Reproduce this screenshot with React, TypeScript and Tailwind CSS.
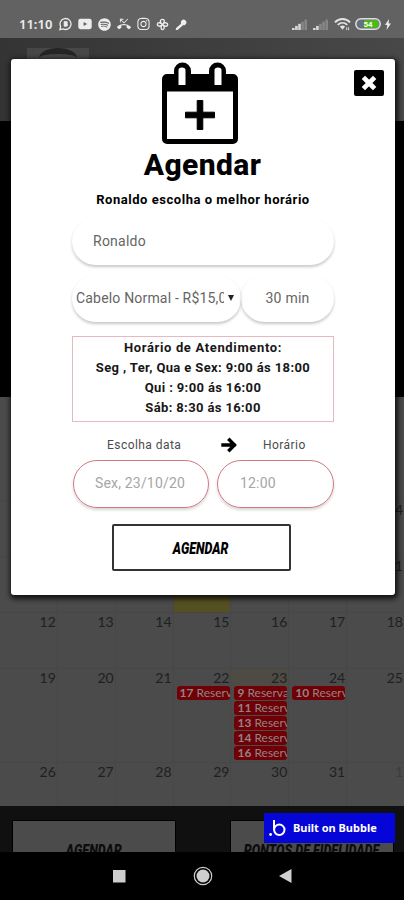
import { FaSpotify, FaInstagram } from "react-icons/fa";
import { MdPhoneMissed } from "react-icons/md";
import clsx from "clsx";

type Day = { day: string; events?: string[]; marked?: boolean; today?: boolean };

const weeks: { height: string; days: Day[] }[] = [
  {
    height: "h-14",
    days: [{ day: "" }, { day: "" }, { day: "" }, { day: "1" }, { day: "2" }, { day: "3" }, { day: "4" }],
  },
  {
    height: "h-14",
    days: [
      { day: "5" },
      { day: "6" },
      { day: "7" },
      { day: "8", marked: true },
      { day: "9" },
      { day: "10" },
      { day: "11" },
    ],
  },
  {
    height: "h-14",
    days: [{ day: "12" }, { day: "13" }, { day: "14" }, { day: "15" }, { day: "16" }, { day: "17" }, { day: "18" }],
  },
  {
    height: "h-[94px]",
    days: [
      { day: "19" },
      { day: "20" },
      { day: "21" },
      { day: "22", events: ["17"] },
      { day: "23", events: ["9", "11", "13", "14", "16"], today: true },
      { day: "24", events: ["10"] },
      { day: "25" },
    ],
  },
  {
    height: "h-11",
    days: [{ day: "26" }, { day: "27" }, { day: "28" }, { day: "29" }, { day: "30" }, { day: "31" }, { day: "1" }],
  },
];

function Signal({ level }: { level: number }) {
  return (
    <svg viewBox="0 0 16 12" className="h-3 w-4">
      {[0, 1, 2, 3, 4].map((i) => (
        <rect key={i} x={i * 3.1} y={10 - i * 2.1} width="2.6" height={2 + i * 2.1} fill={i < level ? "#d6d6d6" : "#858585"} />
      ))}
    </svg>
  );
}

function StatusBar() {
  return (
    <div className="flex h-[38px] items-center justify-between bg-[#626262] pt-[10px] pr-[13px] pl-[19px] text-[#ededed]">
      <div className="flex items-center gap-[6px]">
        <span className="w-[34px] font-['Noto_Sans'] text-[13px] leading-none font-semibold whitespace-nowrap">11:10</span>
        <svg viewBox="0 0 14 14" className="h-[14px] w-[13px]" fill="none" stroke="currentColor" strokeWidth="1.4">
          <path d="M1 13l.8-3.300a5.900 5.900 0 1 1 2.500 2.500Z" />
          <path d="M5.500 4.300h2.300a1.300 1.300 0 0 1 .6 2.500 1.400 1.400 0 0 1-.4 2.700H5.500Z" fill="currentColor" strokeWidth="0.800" />
        </svg>
        <svg viewBox="0 0 15 12" className="h-3 w-[14px]" fill="currentColor">
          <path fillRule="evenodd" d="M2.500.5h10a2.200 2.200 0 0 1 2.200 2.200v6.600a2.200 2.200 0 0 1-2.200 2.200h-10A2.200 2.200 0 0 1 .3 9.300V2.700A2.200 2.200 0 0 1 2.500.5ZM6 3.800v4.400L9.800 6Z" />
        </svg>
        <FaSpotify className="h-[13px] w-[13px]" />
        <MdPhoneMissed className="h-[14px] w-[14px]" />
        <FaInstagram className="h-[14px] w-[13px]" />
        <svg viewBox="0 0 14 14" className="h-[13px] w-[13px]" fill="none" stroke="currentColor" strokeWidth="1.5">
          <path d="M7 7C4 5 4 1.500 7 1.500S9 5 7 7c2-3 6-2 5.500.5S9 9 7 7c3 2 2 5.500 0 5.500S5 9 7 7c-2 3-6 2-5.500-.5S5 5 7 7Z" />
        </svg>
        <svg viewBox="0 0 14 14" className="h-[13px] w-3" fill="currentColor">
          <path d="M8 2a3.300 3.300 0 0 1 5 4c-.6 1.200-2 2-3.300 1.700L3 13.500H.8L1.300 11 7 6C6.500 4.500 7 3 8 2Z" />
        </svg>
      </div>
      <div className="flex items-center gap-1">
        <Signal level={3} />
        <div className="ml-[1px]">
          <Signal level={2} />
        </div>
        <svg viewBox="0 0 18 14" className="ml-[1px] h-[14px] w-[17px]" fill="none" stroke="#e4e4e4" strokeWidth="2">
          <path d="M1 5.200C5.500.6 12.500.6 17 5.200M4 8c3-3 7-3 10 0" />
          <path d="m6.200 9.600 2.800 3.400 2.800-3.400c-1.700-1.500-3.900-1.500-5.600 0Z" fill="#e4e4e4" stroke="none" />
          <path d="M13.500 10.500v3M15.500 10.500v3" strokeWidth="1" />
        </svg>
        <svg viewBox="0 0 26 12" className="h-3 w-[26px]">
          <rect x="0.800" y="0.800" width="24.400" height="10.400" rx="5.200" fill="#66707c" stroke="#dedede" strokeWidth="1.500" />
          <path d="M9 2.200h11a3.800 3.800 0 0 1 0 7.600H9Z" fill="#49bd10" />
          <text x="13" y="9" textAnchor="middle" fill="#fff" className="font-['Roboto'] text-[8px] font-bold">
            54
          </text>
        </svg>
        <svg viewBox="0 0 6 11" className="h-[11px] w-[6px]" fill="currentColor">
          <path d="M4 0 0 6h2.300L1.500 11 6 4.500H3.600Z" />
        </svg>
      </div>
    </div>
  );
}

function Calendar() {
  return (
    <div className="h-[409px] w-[405px] overflow-hidden bg-[#4b4b4b] pt-[103px]">
      {weeks.map((week, w) => (
        <div key={w} className={clsx("grid grid-cols-7 border-t border-[#474747]", week.height)}>
          {week.days.map((d, i) => (
            <div key={i} className={clsx("min-w-0 border-r border-[#474747]", d.marked && "bg-[#555022]")}>
              <div
                className={clsx(
                  "h-[17px] pr-[1px] text-right font-['Lato'] text-[14px] leading-[17px]",
                  d.today && "bg-[#4d4b43]",
                  w === 4 && i === 6 ? "text-[#3d3d3d]" : "text-[#202020]"
                )}
              >
                {d.day}
              </div>
              {d.events?.map((hour) => (
                <div
                  key={hour}
                  className="mb-[1px] ml-[3px] h-[14px] w-[53px] overflow-hidden rounded-[3px] bg-[#700006] pl-[3px] font-['Lato'] text-[12px] leading-[14px] whitespace-nowrap text-[#8f8585]"
                >
                  <b>{hour}</b> Reserva
                </div>
              ))}
            </div>
          ))}
        </div>
      ))}
    </div>
  );
}

function CalendarPlus() {
  return (
    <svg viewBox="0 0 76 84" className="h-[84px] w-[76px]">
      <path
        fillRule="evenodd"
        d="M5 12h7V9a8.500 8.500 0 0 1 17 0v3h18V9a8.500 8.500 0 0 1 17 0v3h7a5 5 0 0 1 5 5v60a5 5 0 0 1-5 5H5a5 5 0 0 1-5-5V17a5 5 0 0 1 5-5ZM5 29.500v47.500h66V29.500Z"
      />
      <path d="M16.500 8a3.500 2.500 0 0 1 7 0v15h-7ZM52.500 8a3.500 2.500 0 0 1 7 0v15h-7Z" fill="#fff" />
      <path d="M35.200 38.500h5.600v11.700h11.700v5.600H40.800v11.700h-5.600V55.800H23.500v-5.600h11.700Z" stroke="#000" strokeWidth="1" strokeLinejoin="round" />
    </svg>
  );
}

function BookingModal() {
  return (
    <div className="absolute top-[59px] left-[11px] flex h-[536px] w-[384px] flex-col items-center rounded-[3px] bg-white pt-[3px] shadow-[1px_2px_5px_2px_rgba(0,0,0,0.75)]">
      <button className="absolute top-[11px] right-[11px] flex h-[26px] w-[30px] items-center justify-center rounded-[2px] bg-black">
        <svg viewBox="0 0 16 16" className="h-4 w-4" stroke="#fff" strokeWidth="4.700" strokeLinecap="square">
          <path d="m4 4 8 8M12 4l-8 8" />
        </svg>
      </button>
      <div className="mr-[6px]">
        <CalendarPlus />
      </div>
      <h1 className="mt-[1px] mr-px h-9 font-['Roboto'] text-[30px] leading-9 font-extrabold tracking-[0.4px]">Agendar</h1>
      <p className="mt-[9px] font-['Roboto'] text-[13px] leading-4 font-bold tracking-[0.53px] whitespace-nowrap">
        Ronaldo escolha o melhor horário
      </p>

      <div className="mt-[10px] w-[262px] font-['Roboto'] text-[14px] text-[#656565]">
        <div className="flex h-[47px] items-center rounded-full pb-px pl-[21px] tracking-[0.25px] shadow-[0_2px_3px_rgba(0,0,0,0.22)]">
          Ronaldo
        </div>
        <div className="mt-[10px] flex">
          <div className="flex h-[47px] w-[169px] items-center rounded-full pb-px pl-1 shadow-[0_2px_3px_rgba(0,0,0,0.22)]">
            <span className="w-[148px] overflow-hidden tracking-[0.18px] whitespace-nowrap">Cabelo Normal - R$15,00</span>
            <svg viewBox="0 0 6 6" className="ml-1 h-[6px] w-[6px]">
              <path d="M0 0h6L3 6Z" fill="#222" />
            </svg>
          </div>
          <div className="flex h-[47px] w-[93px] items-center justify-center rounded-full pb-px tracking-[0.25px] shadow-[0_2px_3px_rgba(0,0,0,0.22)]">
            30 min
          </div>
        </div>
      </div>

      <div className="mt-[14px] h-[86px] w-[262px] border border-[#e6b9be] pt-px text-center font-['Roboto'] text-[13px] leading-5 font-bold tracking-[0.37px] whitespace-nowrap text-[#171717]">
        <p className="tracking-[0.65px]">Horário de Atendimento:</p>
        <p>Seg , Ter, Qua e Sex: 9:00 ás 18:00</p>
        <p>Qui : 9:00 ás 16:00</p>
        <p>Sáb: 8:30 ás 16:00</p>
      </div>

      <div className="mt-[14px] flex h-[18px] w-[262px] items-center pl-[35px] font-['Roboto'] text-[12px] tracking-[0.45px] text-[#4c4c4c]">
        <span className="w-[114px]">Escolha data</span>
        <svg viewBox="0 0 16 16" className="h-4 w-4" fill="none" stroke="#000" strokeWidth="3.400" strokeLinecap="square">
          <path d="M2 8h11M8.500 3l5 5-5 5" />
        </svg>
        <span className="ml-[26px] tracking-[0.45px]">Horário</span>
      </div>

      <div className="mt-[6px] flex w-[262px] justify-between pl-px font-['Roboto'] text-[14px] tracking-[0.18px] text-[#a6a6a6]">
        <div className="flex h-12 w-[136px] items-center rounded-full border border-[#d17880] pb-[2px] pl-[21px] shadow-[0_2px_3px_rgba(0,0,0,0.16)]">
          Sex, 23/10/20
        </div>
        <div className="flex h-12 w-[117px] items-center rounded-full border border-[#d17880] pb-[2px] pl-[22px] shadow-[0_2px_3px_rgba(0,0,0,0.16)]">
          12:00
        </div>
      </div>

      <button className="mt-[16px] mr-[4px] flex h-[47px] w-[179px] items-center justify-center rounded-[2px] border-2 border-[#333] pt-[2px]">
        <span className="scale-x-[0.78] font-['Roboto'] text-[16px] font-black whitespace-nowrap italic">AGENDAR</span>
      </button>
    </div>
  );
}

export default function App() {
  return (
    <div className="relative h-[900px] w-[404px] overflow-hidden bg-black">
      <StatusBar />
      <div className="flex h-[83px] bg-linear-to-r from-[#343434] to-[#484848] pt-[10px] pl-[27px]">
        <div className="h-[20px] w-[62px] overflow-hidden bg-[#474747]">
          <div className="mx-auto h-[20px] w-[38px] rounded-t-[50%] border-t-[6px] border-[#252525]" />
        </div>
      </div>
      <div className="h-[276px] bg-black" />
      <Calendar />
      <div className="flex h-[46px] items-start justify-between overflow-hidden bg-[#101010] pt-[14px] pr-[10px] pl-[12px] font-['Roboto'] text-[17px] font-black text-[#0c0c0c] italic">
        <div className="flex h-[60px] w-[164px] justify-center border border-black bg-[#4b4b4b] pt-[17px]">
          <span className="scale-x-[0.74] whitespace-nowrap">AGENDAR</span>
        </div>
        <div className="flex h-[60px] w-[164px] justify-center border border-black bg-[#4b4b4b] pt-[17px]">
          <span className="scale-x-[0.74] whitespace-nowrap">PONTOS DE FIDELIDADE</span>
        </div>
      </div>
      <div className="flex h-12 items-center bg-black pl-[112px]">
        <svg viewBox="0 0 180 20" className="h-5 w-[180px]" fill="#cecece">
          <rect x="1" y="4" width="12.500" height="12.500" />
          <circle cx="91" cy="10" r="6.500" />
          <circle cx="91" cy="10" r="8.700" fill="none" stroke="#cecece" strokeWidth="1.200" />
          <path d="M167 10 179.500 3v14Z" />
        </svg>
      </div>

      <BookingModal />

      <div className="absolute top-[813px] left-[264px] flex h-[30px] w-[131px] items-center bg-[#0505d8] pl-[5px] text-white">
        <svg viewBox="0 0 17 18" className="h-[18px] w-[17px]" fill="none" stroke="currentColor" strokeWidth="2">
          <path d="M5 1v10" />
          <circle cx="10.300" cy="10.800" r="5.200" />
          <circle cx="1.600" cy="15.500" r="1.400" fill="currentColor" stroke="none" />
        </svg>
        <span className="ml-[7px] font-['Noto_Sans'] text-[11px] font-bold whitespace-nowrap">Built on Bubble</span>
      </div>
    </div>
  );
}
